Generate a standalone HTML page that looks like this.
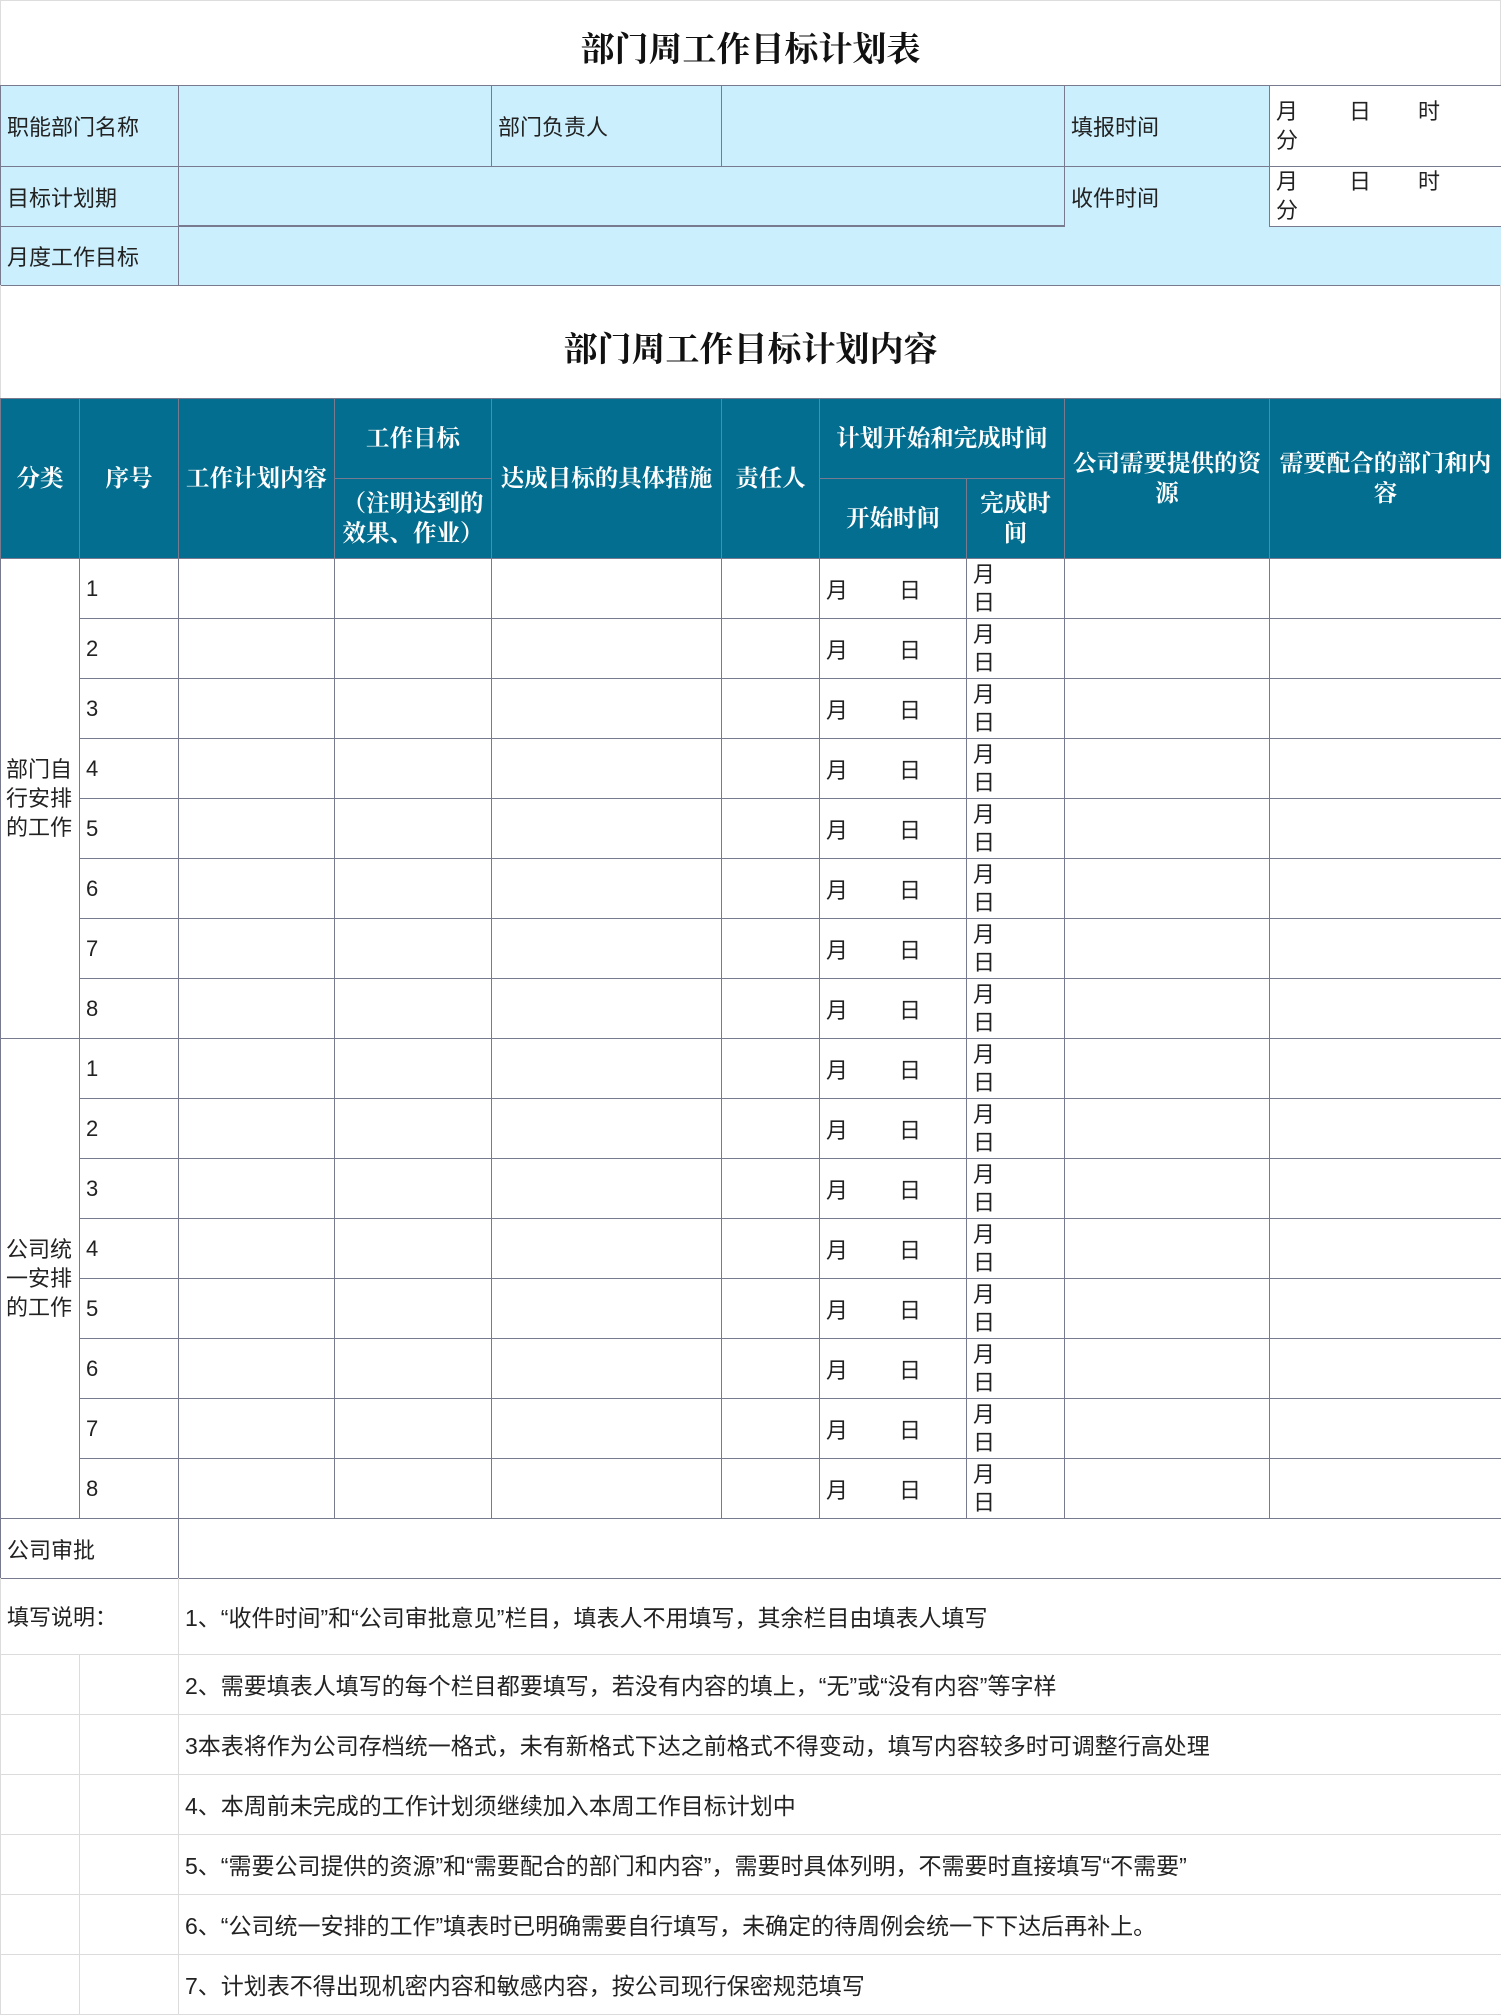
<!DOCTYPE html>
<html><head><meta charset="utf-8"><style>
*{margin:0;padding:0;box-sizing:border-box}
body{width:1501px;height:2015px;background:#fff;font-family:"Liberation Sans","Noto Sans CJK SC",sans-serif;color:#222;position:relative;overflow:hidden}
.t{position:absolute;left:0;width:1501px;text-align:center;font-family:"Liberation Serif","Noto Serif CJK SC",serif;font-weight:bold;font-size:34px;color:#111}
table{position:absolute;left:0;border-collapse:collapse;table-layout:fixed;width:1501px}
td{border:1px solid #787b90;font-size:22px;padding:0 0 0 6px;vertical-align:middle;white-space:nowrap;overflow:hidden}
.b{background:#cbeffd}
.h td{background:#036e8f;color:#fff;font-family:"Liberation Serif","Noto Serif CJK SC",serif;font-weight:bold;font-size:23.5px;text-align:center;padding:0 4px;white-space:normal;line-height:30px}
.d td{height:60px}
.n td{border-color:#dcdcdc;height:60px;font-size:23px}
.wr{white-space:normal;line-height:29px;padding-left:5px}
.m{display:inline-block;width:73px}
.m2{display:inline-block;width:69px}
</style></head><body>
<div style="position:absolute;left:0;top:0;width:1501px;height:1px;background:#ddd"></div>
<div style="position:absolute;left:0;top:0;width:1px;height:85px;background:#ddd"></div>
<div style="position:absolute;right:0;top:0;width:1px;height:85px;background:#ddd"></div>
<div class="t" style="top:22px">部门周工作目标计划表</div>

<table style="top:85px">
<colgroup><col style="width:178px"><col style="width:313px"><col style="width:230px"><col style="width:343px"><col style="width:205px"><col style="width:232px"></colgroup>
<tr style="height:81px"><td class="b">职能部门名称</td><td class="b"></td><td class="b">部门负责人</td><td class="b"></td><td class="b">填报时间</td><td style="vertical-align:top;padding:11px 0 0 6px;line-height:29px"><span class="m">月</span><span class="m2">日</span>时<br>分</td></tr>
<tr style="height:60px"><td class="b">目标计划期</td><td class="b" colspan="3"></td><td class="b" style="border-bottom:none">收件时间</td><td style="vertical-align:top;padding:0 0 0 6px;line-height:29px"><span class="m">月</span><span class="m2">日</span>时<br>分</td></tr>
<tr style="height:59px"><td class="b">月度工作目标</td><td class="b" colspan="5" style="border-top:none"></td></tr>
</table>
<div style="position:absolute;left:178px;top:225px;width:886px;height:1px;background:#787b90"></div>

<div style="position:absolute;left:0;top:285px;width:1px;height:113px;background:#ddd"></div>
<div style="position:absolute;right:0;top:285px;width:1px;height:113px;background:#ddd"></div>
<div class="t" style="top:322px">部门周工作目标计划内容</div>

<table style="top:398px">
<colgroup><col style="width:79px"><col style="width:99px"><col style="width:156px"><col style="width:157px"><col style="width:230px"><col style="width:98px"><col style="width:147px"><col style="width:98px"><col style="width:205px"><col style="width:232px"></colgroup>
<tr class="h" style="height:80px"><td rowspan="2">分类</td><td rowspan="2">序号</td><td rowspan="2" style="padding:0">工作计划内容</td><td>工作目标</td><td rowspan="2" style="padding:0">达成目标的具体措施</td><td rowspan="2" style="padding:0">责任人</td><td colspan="2">计划开始和完成时间</td><td rowspan="2" style="padding:0 2px">公司需要提供的资源</td><td rowspan="2" style="padding:0 2px">需要配合的部门和内容</td></tr>
<tr class="h" style="height:80px"><td style="padding:0 2px">（注明达到的效果、作业）</td><td>开始时间</td><td style="padding:0 10px">完成时间</td></tr>
<tr class="d"><td rowspan="8" class="wr" style="font-size:22px">部门自行安排的工作</td><td>1</td><td></td><td></td><td></td><td></td><td><span class="m">月</span>日</td><td style="line-height:28px">月<br>日</td><td></td><td></td></tr>
<tr class="d"><td>2</td><td></td><td></td><td></td><td></td><td><span class="m">月</span>日</td><td style="line-height:28px">月<br>日</td><td></td><td></td></tr>
<tr class="d"><td>3</td><td></td><td></td><td></td><td></td><td><span class="m">月</span>日</td><td style="line-height:28px">月<br>日</td><td></td><td></td></tr>
<tr class="d"><td>4</td><td></td><td></td><td></td><td></td><td><span class="m">月</span>日</td><td style="line-height:28px">月<br>日</td><td></td><td></td></tr>
<tr class="d"><td>5</td><td></td><td></td><td></td><td></td><td><span class="m">月</span>日</td><td style="line-height:28px">月<br>日</td><td></td><td></td></tr>
<tr class="d"><td>6</td><td></td><td></td><td></td><td></td><td><span class="m">月</span>日</td><td style="line-height:28px">月<br>日</td><td></td><td></td></tr>
<tr class="d"><td>7</td><td></td><td></td><td></td><td></td><td><span class="m">月</span>日</td><td style="line-height:28px">月<br>日</td><td></td><td></td></tr>
<tr class="d"><td>8</td><td></td><td></td><td></td><td></td><td><span class="m">月</span>日</td><td style="line-height:28px">月<br>日</td><td></td><td></td></tr>
<tr class="d"><td rowspan="8" class="wr" style="font-size:22px">公司统一安排的工作</td><td>1</td><td></td><td></td><td></td><td></td><td><span class="m">月</span>日</td><td style="line-height:28px">月<br>日</td><td></td><td></td></tr>
<tr class="d"><td>2</td><td></td><td></td><td></td><td></td><td><span class="m">月</span>日</td><td style="line-height:28px">月<br>日</td><td></td><td></td></tr>
<tr class="d"><td>3</td><td></td><td></td><td></td><td></td><td><span class="m">月</span>日</td><td style="line-height:28px">月<br>日</td><td></td><td></td></tr>
<tr class="d"><td>4</td><td></td><td></td><td></td><td></td><td><span class="m">月</span>日</td><td style="line-height:28px">月<br>日</td><td></td><td></td></tr>
<tr class="d"><td>5</td><td></td><td></td><td></td><td></td><td><span class="m">月</span>日</td><td style="line-height:28px">月<br>日</td><td></td><td></td></tr>
<tr class="d"><td>6</td><td></td><td></td><td></td><td></td><td><span class="m">月</span>日</td><td style="line-height:28px">月<br>日</td><td></td><td></td></tr>
<tr class="d"><td>7</td><td></td><td></td><td></td><td></td><td><span class="m">月</span>日</td><td style="line-height:28px">月<br>日</td><td></td><td></td></tr>
<tr class="d"><td>8</td><td></td><td></td><td></td><td></td><td><span class="m">月</span>日</td><td style="line-height:28px">月<br>日</td><td></td><td></td></tr>
<tr class="d"><td colspan="2">公司审批</td><td colspan="8"></td></tr>
</table>

<table style="top:1578px">
<colgroup><col style="width:79px"><col style="width:99px"><col style="width:1323px"></colgroup>
<tr class="n"><td colspan="2" style="height:76px;border-top:none;font-size:22px">填写说明：</td><td style="height:76px;border-top:none">1、“收件时间”和“公司审批意见”栏目，填表人不用填写，其余栏目由填表人填写</td></tr>
<tr class="n"><td></td><td></td><td>2、需要填表人填写的每个栏目都要填写，若没有内容的填上，“无”或“没有内容”等字样</td></tr>
<tr class="n"><td></td><td></td><td>3本表将作为公司存档统一格式，未有新格式下达之前格式不得变动，填写内容较多时可调整行高处理</td></tr>
<tr class="n"><td></td><td></td><td>4、本周前未完成的工作计划须继续加入本周工作目标计划中</td></tr>
<tr class="n"><td></td><td></td><td>5、“需要公司提供的资源”和“需要配合的部门和内容”，需要时具体列明，不需要时直接填写“不需要”</td></tr>
<tr class="n"><td></td><td></td><td>6、“公司统一安排的工作”填表时已明确需要自行填写，未确定的待周例会统一下下达后再补上。</td></tr>
<tr class="n"><td></td><td></td><td>7、计划表不得出现机密内容和敏感内容，按公司现行保密规范填写</td></tr>
</table>
</body></html>
